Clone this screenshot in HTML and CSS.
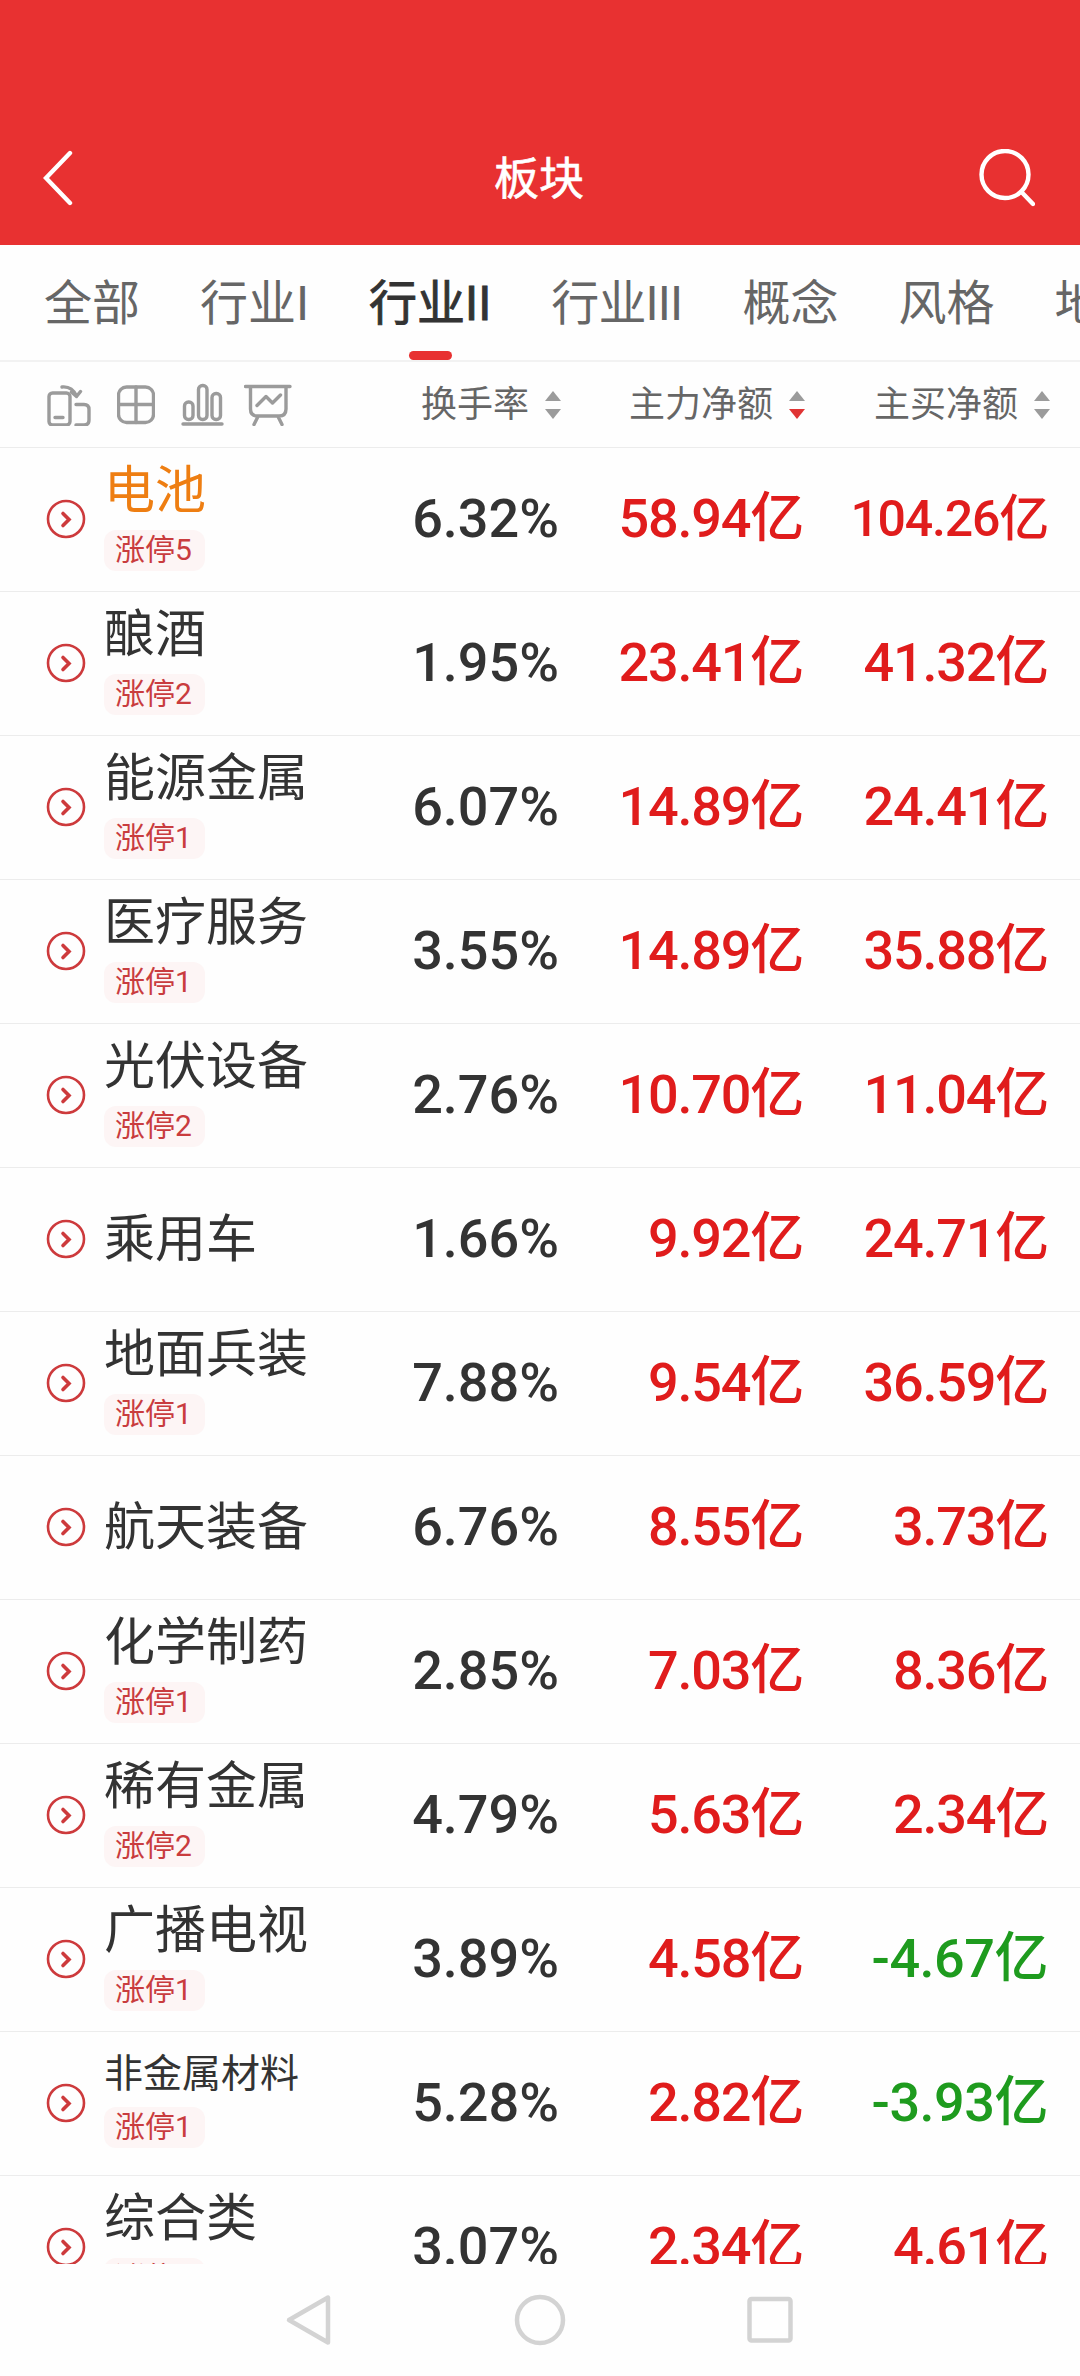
FILE: index.html
```html
<!DOCTYPE html>
<html lang="zh-CN">
<head>
    <meta charset="UTF-8">
    <title>板块</title>
    <link rel="stylesheet" href="styles.css">
</head>
<body>

<!-- 公用图标 -->
<svg class="defs" width="0" height="0">
    <symbol id="go" viewBox="0 0 40 40">
        <circle cx="20" cy="20" r="18" fill="none" stroke="#cd3a3c" stroke-width="2.6"/>
        <path d="M17 14.500l6 6-6 6" fill="none" stroke="#cd3a3c" stroke-width="3.6" stroke-linecap="round"/>
    </symbol>
</svg>

<header class="header">
    <svg class="back" width="30" height="56" viewBox="0 0 30 56">
        <path d="M27 3L3 28l24 25" fill="none" stroke="#fff" stroke-width="4.4" stroke-linecap="round"/>
    </svg>
    <h1 class="title">板块</h1>
    <svg class="search" width="58" height="58" viewBox="0 0 58 58">
        <circle cx="28" cy="25.500" r="23.500" fill="none" stroke="#fff" stroke-width="4.4"/>
        <path d="M44.500 43l11.500 12" fill="none" stroke="#fff" stroke-width="4.4" stroke-linecap="round"/>
    </svg>
</header>

<nav class="tabs">
    <a class="tab">全部</a>
    <a class="tab">行业I</a>
    <a class="tab active">行业II</a>
    <a class="tab tight">行业III</a>
    <a class="tab">概念</a>
    <a class="tab">风格</a>
    <a class="tab">地域</a>
</nav>

<div class="thead">
    <div class="tools">
        <svg width="44" height="44" viewBox="0 0 44 44">
            <rect x="2" y="11" width="21" height="32" rx="3.5"/>
            <path d="M8 35.500h8M15 5q10-1 14.500 9M24.500 10l5 4.500 4-5M29 22.500h8q5 0 5 5v10.500q0 5-5 5h-8"/>
        </svg>
        <svg width="38" height="44" viewBox="0 0 38 44">
            <rect x="1.500" y="5" width="35" height="35.500" rx="8"/>
            <path d="M19 5v35.500M1.500 22.500h35"/>
        </svg>
        <svg width="43" height="44" viewBox="0 0 43 44">
            <rect x="3.500" y="20" width="8.500" height="17.500" rx="4"/>
            <rect x="17.500" y="3.500" width="8.500" height="34" rx="4"/>
            <rect x="31" y="11.500" width="8.500" height="26" rx="4"/>
            <path d="M2 42h39"/>
        </svg>
        <svg class="board" width="48" height="44" viewBox="0 0 48 44">
            <path d="M1.500 4.500h44.500M6.500 5v22q0 7 7 7h21.500q7 0 7-7V5M14 34.500l-4 8M34 34.500l4 8M13 23.500l9-9 6.500 6.500 8-8"/>
        </svg>
    </div>
    <div class="th">换手率
        <svg class="sort" width="16" height="28" viewBox="0 0 16 28"><path d="M0 10L8 0l8 10z"/><path d="M0 18h16L8 28z"/></svg>
    </div>
    <div class="th">主力净额
        <svg class="sort desc" width="16" height="28" viewBox="0 0 16 28"><path d="M0 10L8 0l8 10z"/><path d="M0 18h16L8 28z"/></svg>
    </div>
    <div class="th">主买净额
        <svg class="sort" width="16" height="28" viewBox="0 0 16 28"><path d="M0 10L8 0l8 10z"/><path d="M0 18h16L8 28z"/></svg>
    </div>
</div>

<div class="list">
    <div class="row">
        <svg class="go"><use href="#go"/></svg>
        <div class="name hot">电池<span class="tag">涨停5</span></div>
        <div class="num rate">6.32%</div>
        <div class="num up">58.94亿</div>
        <div class="num up long">104.26亿</div>
    </div>
    <div class="row">
        <svg class="go"><use href="#go"/></svg>
        <div class="name">酿酒<span class="tag">涨停2</span></div>
        <div class="num rate">1.95%</div>
        <div class="num up">23.41亿</div>
        <div class="num up">41.32亿</div>
    </div>
    <div class="row">
        <svg class="go"><use href="#go"/></svg>
        <div class="name">能源金属<span class="tag">涨停1</span></div>
        <div class="num rate">6.07%</div>
        <div class="num up">14.89亿</div>
        <div class="num up">24.41亿</div>
    </div>
    <div class="row">
        <svg class="go"><use href="#go"/></svg>
        <div class="name">医疗服务<span class="tag">涨停1</span></div>
        <div class="num rate">3.55%</div>
        <div class="num up">14.89亿</div>
        <div class="num up">35.88亿</div>
    </div>
    <div class="row">
        <svg class="go"><use href="#go"/></svg>
        <div class="name">光伏设备<span class="tag">涨停2</span></div>
        <div class="num rate">2.76%</div>
        <div class="num up">10.70亿</div>
        <div class="num up">11.04亿</div>
    </div>
    <div class="row">
        <svg class="go"><use href="#go"/></svg>
        <div class="name">乘用车</div>
        <div class="num rate">1.66%</div>
        <div class="num up">9.92亿</div>
        <div class="num up">24.71亿</div>
    </div>
    <div class="row">
        <svg class="go"><use href="#go"/></svg>
        <div class="name">地面兵装<span class="tag">涨停1</span></div>
        <div class="num rate">7.88%</div>
        <div class="num up">9.54亿</div>
        <div class="num up">36.59亿</div>
    </div>
    <div class="row">
        <svg class="go"><use href="#go"/></svg>
        <div class="name">航天装备</div>
        <div class="num rate">6.76%</div>
        <div class="num up">8.55亿</div>
        <div class="num up">3.73亿</div>
    </div>
    <div class="row">
        <svg class="go"><use href="#go"/></svg>
        <div class="name">化学制药<span class="tag">涨停1</span></div>
        <div class="num rate">2.85%</div>
        <div class="num up">7.03亿</div>
        <div class="num up">8.36亿</div>
    </div>
    <div class="row">
        <svg class="go"><use href="#go"/></svg>
        <div class="name">稀有金属<span class="tag">涨停2</span></div>
        <div class="num rate">4.79%</div>
        <div class="num up">5.63亿</div>
        <div class="num up">2.34亿</div>
    </div>
    <div class="row">
        <svg class="go"><use href="#go"/></svg>
        <div class="name">广播电视<span class="tag">涨停1</span></div>
        <div class="num rate">3.89%</div>
        <div class="num up">4.58亿</div>
        <div class="num down">-4.67亿</div>
    </div>
    <div class="row">
        <svg class="go"><use href="#go"/></svg>
        <div class="name small">非金属材料<span class="tag">涨停1</span></div>
        <div class="num rate">5.28%</div>
        <div class="num up">2.82亿</div>
        <div class="num down">-3.93亿</div>
    </div>
    <div class="row">
        <svg class="go"><use href="#go"/></svg>
        <div class="name">综合类<span class="tag">涨停1</span></div>
        <div class="num rate">3.07%</div>
        <div class="num up">2.34亿</div>
        <div class="num up">4.61亿</div>
    </div>
</div>

<!-- 系统导航键 -->
<footer class="sysbar">
    <svg width="50" height="54" viewBox="0 0 50 54">
        <path d="M44 4.500V49.500L5 27z"/>
    </svg>
    <svg width="54" height="54" viewBox="0 0 54 54">
        <circle cx="27" cy="27" r="23"/>
    </svg>
    <svg width="50" height="54" viewBox="0 0 50 54">
        <rect x="4.500" y="6" width="41" height="41.500" rx="2"/>
    </svg>
</footer>

</body>
</html>
```
FILE: styles.css
```css
* {
    box-sizing: border-box;
}
body {
    margin: 0;
    width: 1080px;
    height: 2376px;
    overflow: hidden;
    background: #fefefe;
    color: #333;
    font-family: Roboto, "Noto Sans CJK SC", sans-serif;
}
.defs {
    display: block;
}

/* 顶部标题栏 */
.header {
    display: flex;
    align-items: center;
    justify-content: space-between;
    height: 245px;
    padding: 110px 45px 0 43px;
    background: #e83131;
    color: #fff;
}
.title {
    margin: 4px 0 0 28px;
    font-size: 45px;
    line-height: 60px;
    font-weight: 400;
    -webkit-text-stroke: 0.6px #fff;
}

/* 分类标签 */
.tabs {
    display: flex;
    gap: 60px;
    height: 117px;
    padding-left: 44px;
    border-bottom: 2px solid #f2f2f2;
    overflow: hidden;
    white-space: nowrap;
}
.tab {
    position: relative;
    flex: none;
    color: #666;
    font-size: 48px;
    line-height: 118px;
}
.tab.tight {
    letter-spacing: -0.8px;
}
.tab.active {
    color: #333;
    -webkit-text-stroke: 0.9px #333;
}
.tab.active::after {
    content: "";
    position: absolute;
    left: 50%;
    bottom: 0;
    width: 43px;
    height: 9px;
    margin-left: -21px;
    border-radius: 5px;
    background: #e83131;
}

/* 表头 */
.thead {
    display: grid;
    grid-template-columns: 300px 261px 244px 245px;
    align-items: center;
    height: 86px;
    border-bottom: 1px solid #ececec;
}
.tools {
    display: flex;
    gap: 26px;
    padding: 0 0 2px 47px;
}
.tools svg {
    flex: none;
    fill: none;
    stroke: #9b9b9b;
    stroke-width: 3.4;
    stroke-linecap: round;
    stroke-linejoin: round;
}
.tools .board {
    margin-left: -6px;
}
.th {
    display: flex;
    align-items: center;
    justify-content: flex-end;
    gap: 16px;
    color: #666;
    font-size: 36px;
    line-height: 48px;
}
.sort {
    fill: #9b9b9b;
}
.desc path:last-child {
    fill: #e03434;
}

/* 列表 */
.list {
    height: 1816px;
    overflow: hidden;
}
.row {
    display: grid;
    grid-template-columns: 104px 275px 180px 244px 245px;
    align-items: center;
    height: 144px;
    border-bottom: 1px solid #ececec;
}
.go {
    width: 40px;
    height: 40px;
    margin: 0 0 2px 46px;
}
.name {
    font-size: 51px;
    line-height: 63px;
}
.name.small {
    font-size: 39px;
    line-height: 53px;
}
.name.small .tag {
    margin: 6px 0 11px;
}
.hot {
    color: #ee7e12;
}
.tag {
    display: block;
    width: 101px;
    height: 41px;
    margin: 8px 0 10px;
    padding-left: 11px;
    border-radius: 12px;
    background: #fdf5f5;
    color: #c93c3e;
    font-size: 30px;
    line-height: 40px;
}
.num {
    margin-bottom: 2px;
    font-size: 54px;
    line-height: 64px;
    font-weight: 500;
    letter-spacing: -1.2px;
    text-align: right;
    white-space: nowrap;
}
.rate {
    letter-spacing: 0;
}
.up {
    color: #e01c1c;
}
.down {
    color: #1e9b1e;
    letter-spacing: -0.5px;
}
.long {
    font-size: 50px;
}

/* 底部系统栏 */
.sysbar {
    display: flex;
    align-items: center;
    justify-content: space-between;
    height: 112px;
    padding: 0 285px 0 284px;
}
.sysbar svg {
    fill: none;
    stroke: #d3d3d3;
    stroke-width: 4.5;
    stroke-linejoin: round;
}
```
